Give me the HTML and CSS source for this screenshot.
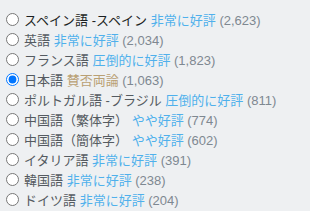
FILE: index.html
```html
<!DOCTYPE html>
<html lang="ja">
<head>
<meta charset="utf-8">
<link rel="stylesheet" href="styles.css">
</head>
<body>
<div class="list">
  <label class="row hover"><input type="radio" name="lang"><span class="text"><span class="name">スペイン語 -スペイン</span> <span class="pos">非常に好評</span> <span class="count">(2,623)</span></span></label>
  <label class="row"><input type="radio" name="lang"><span class="text"><span class="name">英語</span> <span class="pos">非常に好評</span> <span class="count">(2,034)</span></span></label>
  <label class="row"><input type="radio" name="lang"><span class="text"><span class="name">フランス語</span> <span class="pos">圧倒的に好評</span> <span class="count">(1,823)</span></span></label>
  <label class="row"><input type="radio" name="lang" checked><span class="text"><span class="name">日本語</span> <span class="mixed">賛否両論</span> <span class="count">(1,063)</span></span></label>
  <label class="row"><input type="radio" name="lang"><span class="text"><span class="name">ポルトガル語 -ブラジル</span> <span class="pos">圧倒的に好評</span> <span class="count">(811)</span></span></label>
  <label class="row"><input type="radio" name="lang"><span class="text"><span class="name">中国語（繁体字）</span> <span class="pos">やや好評</span> <span class="count">(774)</span></span></label>
  <label class="row"><input type="radio" name="lang"><span class="text"><span class="name">中国語（簡体字）</span> <span class="pos">やや好評</span> <span class="count">(602)</span></span></label>
  <label class="row"><input type="radio" name="lang"><span class="text"><span class="name">イタリア語</span> <span class="pos">非常に好評</span> <span class="count">(391)</span></span></label>
  <label class="row"><input type="radio" name="lang"><span class="text"><span class="name">韓国語</span> <span class="pos">非常に好評</span> <span class="count">(238)</span></span></label>
  <label class="row"><input type="radio" name="lang"><span class="text"><span class="name">ドイツ語</span> <span class="pos">非常に好評</span> <span class="count">(204)</span></span></label>
</div>
</body>
</html>
```

FILE: styles.css
```css
html, body {
  margin: 0;
  padding: 0;
  background: #eef0f2;
}
body {
  font-family: Arial, "Liberation Sans", "Noto Sans CJK JP", sans-serif;
  font-size: 13px;
  color: #555b61;
}
.list {
  display: flex;
  flex-direction: column;
  padding: 9px 0 0 0;
}
.row {
  display: flex;
  align-items: center;
  height: 20px;
}
.row input {
  margin: 0 5px 0 6px;
  width: 13px;
  height: 13px;
  flex: none;
}
.text {
  white-space: nowrap;
}
.hover .name {
  color: #1b1f23;
}
.pos {
  color: #4fb0ec;
}
.mixed {
  color: #b9a074;
}
.count {
  color: #7e8891;
}
```
